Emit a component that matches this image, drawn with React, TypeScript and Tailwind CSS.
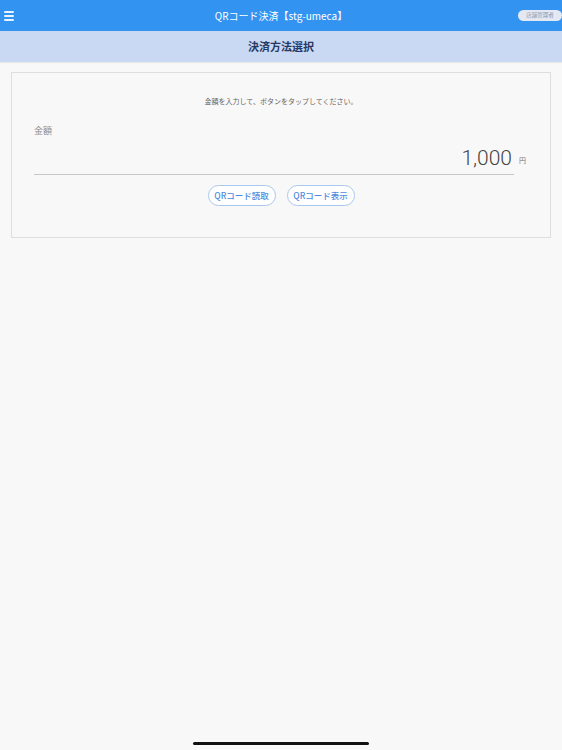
export default function App() {
  return (
    <div
      className="h-[750px] w-[562px] bg-[#f8f8f8] flex flex-col overflow-hidden"
      style={{ fontFamily: '"Noto Sans CJK JP", "Noto Sans", sans-serif' }}
    >
      {/* ヘッダー */}
      <div className="h-[31px] bg-[#3293f0] grid grid-cols-[48px_1fr_48px] items-center pl-[4px]">
        <div className="flex flex-col gap-[2px] w-[10px]">
          <div className="h-[2px] bg-white/90 rounded-sm" />
          <div className="h-[2px] bg-white/90 rounded-sm" />
          <div className="h-[2px] bg-white/90 rounded-sm" />
        </div>
        <div className="text-center text-white text-[10px] leading-none pr-[4px]">QRコード決済【stg-umeca】</div>
        <div className="flex justify-end">
          <div className="h-[11px] w-[44px] text-center rounded-full bg-[#e3e8f2] text-[#8a94a8] text-[5.5px] leading-[11px]">
            店舗管理者
          </div>
        </div>
      </div>

      <div className="h-[31px] bg-[#c9d9f3] flex items-center justify-center text-[#253866] text-[11px] font-bold shadow-[0_1px_1px_rgba(0,0,0,0.06)]">
        決済方法選択
      </div>

      <div className="px-[11px] pt-[10px]">
        <div className="border border-[#dedede] bg-[#f8f8f8] h-[166px] pt-[25px] px-[22px]">
          <p className="text-center text-[7px] text-[#666] leading-none">金額を入力して、ボタンをタップしてください。</p>

          <div className="mt-[21px] text-[9px] text-[#888] leading-none">金額</div>

          <div className="flex items-end mt-[11px]">
            <div className="flex-1 border-b border-[#c8c8c8] text-right pb-[4px] pr-[2px]">
              <span
                className="text-[21px] font-light text-[#444] leading-none"
                style={{ fontFamily: 'Roboto, "Noto Sans", sans-serif' }}
              >
                1,000
              </span>
            </div>
            <span className="w-[14px] text-[7px] text-[#777] pl-[5px] mb-[11px] leading-none">円</span>
          </div>

          <div className="flex justify-center gap-[11px] mt-[10px]">
            <button className="h-[21px] w-[68px] rounded-full border border-[#a9c7ef] text-[#4d8be0] text-[8.5px] font-medium bg-white">
              QRコード読取
            </button>
            <button className="h-[21px] w-[68px] rounded-full border border-[#a9c7ef] text-[#4d8be0] text-[8.5px] font-medium bg-white">
              QRコード表示
            </button>
          </div>
        </div>
      </div>

      <div className="flex-1" />
      <div className="flex justify-center pb-[5px]">
        <div className="w-[176px] h-[3px] rounded-full bg-[#111]" />
      </div>
    </div>
  );
}
